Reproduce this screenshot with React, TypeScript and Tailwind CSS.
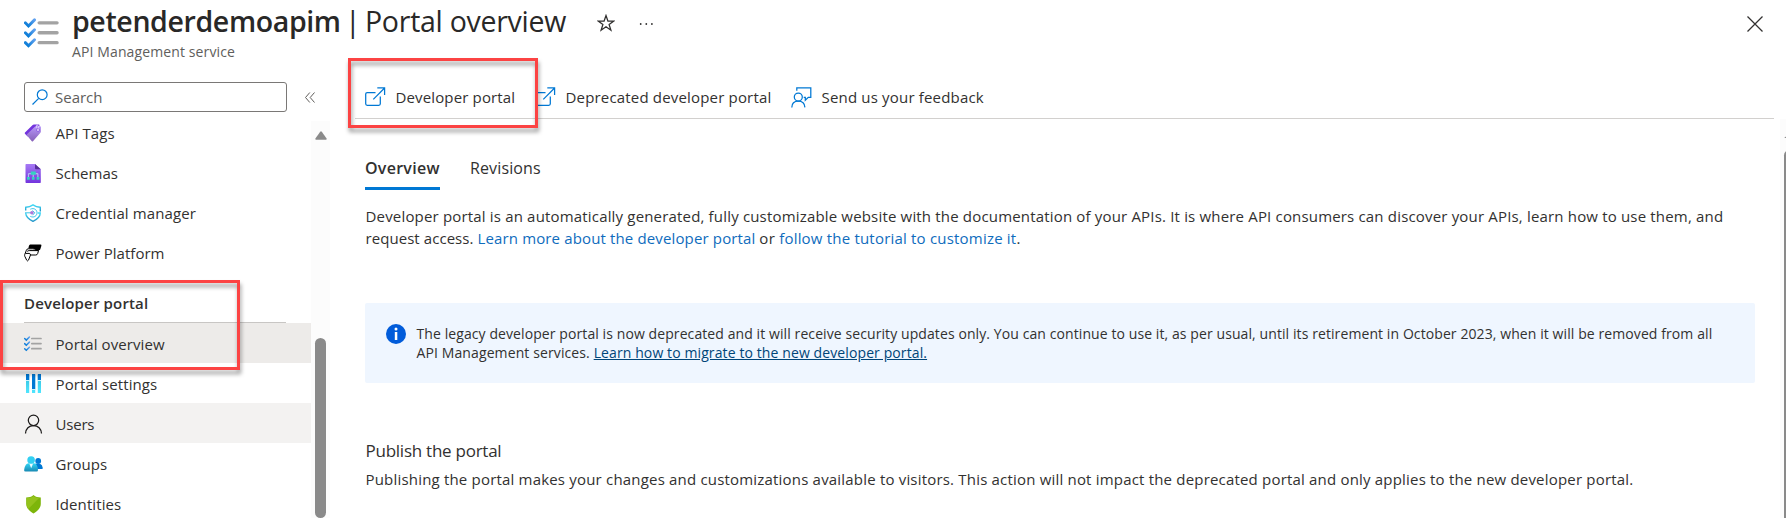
import React from 'react';

type IconProps = { size?: number };

function ChecklistIcon({ size = 18 }: IconProps) {
  return (
    <svg width={size} height={size} viewBox="0 0 18 18" fill="none" className="shrink-0">
      <defs>
        <linearGradient id="chk" x1="0" y1="1" x2="1" y2="0">
          <stop offset="0" stopColor="#0078d4" />
          <stop offset="1" stopColor="#5ea0ef" />
        </linearGradient>
      </defs>
      {[0, 5.1, 10.2].map((y) => (
        <g key={y} transform={`translate(0 ${y})`}>
          <path d="M.7 3.500 2.300 5.100 5.400 2" stroke="url(#chk)" strokeWidth="1.500" strokeLinecap="round" />
          <path d="M7.800 3.500H17" stroke="#a3a3a3" strokeWidth="1.700" strokeLinecap="round" />
        </g>
      ))}
    </svg>
  );
}

function TagIcon() {
  return (
    <svg width="18" height="18" viewBox="0 0 18 18" className="shrink-0">
      <defs>
        <linearGradient id="tag" x1="0" y1="1" x2="0" y2="0">
          <stop offset="0" stopColor="#8661b8" />
          <stop offset="1" stopColor="#b796f9" />
        </linearGradient>
      </defs>
      <path d="M1 8.600 8.400 1.200Q9 .5 10 .5h4.700q.9 0 .9.900L3.600 12.500.9 9.800Q.5 9.200 1 8.600Z" fill="#7334dd" />
      <path d="M3 10.300 10.800 2.700q.5-.5 1.200-.5h4q.9 0 .9.900v4.500q0 .6-.5 1.200L9 17.300q-.6.500-1.200 0L3 11.500q-.5-.6 0-1.200Z" fill="url(#tag)" />
      <circle cx="14" cy="6" r="1.400" fill="#fff" stroke="#7334dd" strokeWidth=".7" />
      <path d="M12.300 3.800q-.4-2.800 1-2.800 1.300.2 1 3.500" fill="none" stroke="#f1e8ff" strokeWidth=".8" />
    </svg>
  );
}

function SchemaIcon() {
  return (
    <svg width="18" height="19" viewBox="0 0 18 18" preserveAspectRatio="none" className="shrink-0">
      <defs>
        <linearGradient id="doc" x1="0" y1="0" x2="0" y2="1">
          <stop offset="0" stopColor="#a67af4" />
          <stop offset="1" stopColor="#7334dd" />
        </linearGradient>
      </defs>
      <path d="M2.200 0H11l5.800 5v12.300q0 .7-.7.700H2.200q-.7 0-.7-.7V.7Q1.500 0 2.200 0Z" fill="url(#doc)" />
      <path d="M11 0l5.800 5H12q-1 0-1-1Z" fill="#552f99" />
      <path d="M4.400 13V9.200h9.500V13M9.200 8v5" fill="none" stroke="#b9d9f5" strokeWidth=".9" />
      <path d="M6.800 7h5v3.200h-5zM3 12.300h2.800v2.600H3zM7.900 12.300h2.700v2.600H7.900zM12.600 12.300h2.800v2.600h-2.800z" fill="#32d4c0" />
    </svg>
  );
}

function CredentialIcon() {
  return (
    <svg width="18" height="18" viewBox="0 0 18 18" fill="none" className="shrink-0">
      <defs>
        <linearGradient id="cred" x1="0" y1="0" x2="0" y2="1">
          <stop offset="0" stopColor="#43dcf7" />
          <stop offset="1" stopColor="#2295c9" />
        </linearGradient>
      </defs>
      <path d="M1.700 6.400V3.300C4.800 3.100 6.800 2.300 9 .8c2.200 1.500 4.200 2.300 7.300 2.500v4.200" stroke="url(#cred)" strokeWidth="1.400" />
      <path d="M1.700 9c.2 4.200 3.200 6.400 7.300 8.300 4.100-1.900 7.100-4.100 7.300-8.300h-2.500" stroke="url(#cred)" strokeWidth="1.400" />
      <path d="M1 8.800h7.500M6.300 5.200c4-1.800 6.700.8 6.700 3.600s-2.700 5.400-6.700 3.600M8.500 6.500l2.300 2.300-2.300 2.400" stroke="#3fc5ec" strokeWidth="1" />
      <circle cx="7.900" cy="8.800" r="1.800" fill="#b078d8" />
    </svg>
  );
}

function PowerIcon() {
  return (
    <svg width="18" height="18" viewBox="0 0 18 18" fill="none" className="shrink-0">
      <path d="M6.200.5h10.300q1.200 0 .9 1.200l-1.100 3.500q-.3 1-1.400 1h-3q-1.200-1.600-3.400-1.600H4.300L4.900 2q.3-1.500 1.300-1.500Z" fill="#000" />
      <path d="M4.300 4.800h4.600q1.900 0 3 1.500h2.700l-.9 3.200q-.4 1.500-2 1.500H6.500l-2 5.100q-.8 1.600-1.800.1L.8 12.300q-.4-1 0-2L2.400 6.200q.5-1.400 1.900-1.400ZM3.200 7.400q.8-.8 2-.8h9M1.500 9.400h3.700q1.300.2 1.300 1.600" stroke="#000" strokeWidth="1" />
    </svg>
  );
}

function SettingsIcon() {
  return (
    <svg width="18" height="20" viewBox="0 0 18 20" className="shrink-0">
      <defs>
        <linearGradient id="bars" x1="0" y1="0" x2="0" y2="1">
          <stop offset="0" stopColor="#32bedd" />
          <stop offset="1" stopColor="#50e6ff" />
        </linearGradient>
      </defs>
      <path d="M2 1h3.200v18H2zM8 1h3.200v18H8zM13.800 1H17v18h-3.200z" fill="url(#bars)" />
      <path d="M2 0h3.200v6H2zM8 0h3.200v15H8zM13.800 0H17v6h-3.200z" fill="#0078d4" />
      <path d="M1.800 6.500h3.600M7.800 15.500h3.600M13.600 6.500h3.600" stroke="#c9f5ff" strokeWidth="1" />
    </svg>
  );
}

function UserIcon() {
  return (
    <svg width="19" height="20" viewBox="0 0 18 20" fill="none" stroke="#1b1a19" strokeWidth="1.250" className="shrink-0">
      <circle cx="9" cy="6.300" r="5.200" />
      <path d="M1 19.500C1.200 14.800 4.500 11.500 9 11.500s7.800 3.300 8 8" />
    </svg>
  );
}

function GroupsIcon() {
  return (
    <svg width="19" height="18" viewBox="0 0 19 18" className="shrink-0">
      <defs>
        <linearGradient id="grp" x1="0" y1="0" x2="0" y2="1">
          <stop offset="0" stopColor="#32d4f5" />
          <stop offset="1" stopColor="#198ab3" />
        </linearGradient>
      </defs>
      <path d="M11 8.700h5q2.300.8 2.800 4.300.1.900-.9.900H10Z" fill="#0078d4" />
      <circle cx="14.200" cy="6" r="2.900" fill="#0078d4" />
      <path d="M1.500 16.500Q0 16.500.1 15C.7 10.500 2.500 8.500 4.500 8.300h5.500c2.500.2 3.700 3 4 6.700q0 1.500-1.300 1.500Z" fill="url(#grp)" />
      <path d="m5.200 8.300 2 5 2-5Z" fill="#eefcff" />
      <circle cx="7.100" cy="5" r="3.800" fill="#32d0f2" />
    </svg>
  );
}

function ShieldIcon() {
  return (
    <svg width="19" height="19" viewBox="0 0 18 19" className="shrink-0">
      <path d="M9 0c2 2 4.500 2.400 7.300 2.500V9c0 4.500-4.300 7.600-7.300 9.500C6 16.600 1.700 13.500 1.700 9V2.500C4.500 2.400 7 2 9 0Z" fill="#7db50a" />
      <path d="M9 .9c2 1.500 3.500 2 5.500 2.200L3.800 14.100C2.800 12.700 2.300 11 2.300 9V3.100C5 3 7.300 2.400 9 .9Z" fill="#94c21c" />
    </svg>
  );
}

function ExternalIcon() {
  return (
    <svg width="21" height="20" viewBox="0 0 21 20" fill="none" stroke="#0078d4" strokeWidth="1.250" className="shrink-0">
      <path d="M10.500 5.600H2.200Q.7 5.600.7 7.100v9.700q0 1.500 1.500 1.500h11.600q1.500 0 1.500-1.500V9.500M8.300 12.400 19.600 1M12.300.8h7.300V8" />
    </svg>
  );
}

function FeedbackIcon() {
  return (
    <svg width="21" height="21" viewBox="0 0 21 21" fill="none" stroke="#0078d4" strokeWidth="1.250" className="shrink-0">
      <path d="M5.800 3.800V.9h14v9.500h-2.500l-3 2.800v-2.800h-1.600" />
      <circle cx="7.300" cy="10" r="4" />
      <path d="M.8 20.400C.9 16.500 3.500 14.200 7.300 14.200s6.400 2.300 6.600 6.200" />
    </svg>
  );
}

function NavRow({ icon, label, state, ls }: { icon: React.ReactNode; label: string; state?: string; ls?: string }) {
  return (
    <li className={`flex h-10 items-center pl-6 ${state ?? ''}`}>
      <span className="flex w-[31.5px] items-center">{icon}</span>
      <span className={`whitespace-nowrap ${ls ?? ''}`}>{label}</span>
    </li>
  );
}

export default function App() {
  return (
    <div className="relative flex h-[518px] w-[1786px] flex-col overflow-hidden bg-white font-['Open_Sans','Noto_Sans',sans-serif] text-[15px] text-[#323130]">
      <header className="flex h-[82px] shrink-0 items-start pl-6">
        <div className="mt-4 w-12">
          <ChecklistIcon size={35} />
        </div>
        <div>
          <div className="flex h-[42px] items-center text-[28.5px] leading-[42px] text-[#292827]">
            <h1 className="flex whitespace-nowrap">
              <span className="w-[273px] font-semibold tracking-[-0.370px]">petenderdemoapim</span>
              <span className="w-[20px]">|</span>
              <span className="w-[231.5px] tracking-[-0.270px]">Portal overview</span>
            </h1>
            <svg width="18" height="18" viewBox="0 0 18 18" fill="none" stroke="#323130" strokeWidth="1.250" className="mt-1">
              <path d="M9 1.500 10.900 7h5.900l-4.700 3.500 1.800 5.700L9 12.700l-4.900 3.500 1.800-5.700L1.200 7h5.900Z" />
            </svg>
            <svg width="15" height="4" viewBox="0 0 15 4" fill="#323130" className="mt-[5px] ml-[24.5px]">
              <circle cx="1.700" cy="2" r=".9" />
              <circle cx="7.300" cy="2" r=".9" />
              <circle cx="12.900" cy="2" r=".9" />
            </svg>
          </div>
          <p className="text-[14px] leading-5 tracking-[0.118px] text-[#605e5c]">API Management service</p>
        </div>
        <svg width="16" height="16" viewBox="0 0 16 16" stroke="#323130" strokeWidth="1.250" className="mt-[15.5px] mr-[23.5px] ml-auto">
          <path d="M.5.5 15.500 15.500M15.500.5.5 15.500" />
        </svg>
      </header>

      <div className="flex min-h-0 flex-1">
        <aside className="flex w-[330px] shrink-0 flex-col">
          <div className="flex h-[30px] shrink-0 items-center pl-6">
            <div className="flex h-[30px] w-[263px] items-center rounded-[3px] border border-[#7a7876] pl-[7px]">
              <svg width="16" height="16" viewBox="0 0 16 16" fill="none" stroke="#0078d4" strokeWidth="1.200">
                <circle cx="10.200" cy="5.700" r="4.900" />
                <path d="M6.700 9.300.5 15.500" />
              </svg>
              <span className="ml-[7px] text-[#605e5c]">Search</span>
            </div>
            <svg width="10" height="11" viewBox="0 0 10 11" fill="none" stroke="#605e5c" strokeWidth="1" className="ml-[18px]">
              <path d="M4.800.5.500 5.500l4.300 5M9.500.5 5.200 5.500l4.300 5" />
            </svg>
          </div>
          <div className="flex min-h-0 flex-1">
            <nav className="w-[311px] overflow-hidden pt-px">
              <ul>
                <NavRow icon={<TagIcon />} label="API Tags" ls="tracking-[0.100px]" />
                <NavRow icon={<SchemaIcon />} label="Schemas" />
                <NavRow icon={<CredentialIcon />} label="Credential manager" ls="tracking-[0.120px]" />
                <NavRow icon={<PowerIcon />} label="Power Platform" ls="tracking-[0.020px]" />
              </ul>
              <h2 className="ml-6 flex h-[50px] w-[262px] items-center border-b border-[#c8c6c4] pt-[12px] font-semibold tracking-[0.160px]">Developer portal</h2>
              <ul>
                <NavRow icon={<ChecklistIcon />} label="Portal overview" state="bg-[#edebe9] pt-[2px]" ls="tracking-[0.080px]" />
                <NavRow icon={<SettingsIcon />} label="Portal settings" state="pt-[2px]" ls="tracking-[0.120px]" />
                <NavRow icon={<UserIcon />} label="Users" state="bg-[#f3f2f1] pt-[2px]" ls="tracking-[-0.200px]" />
                <NavRow icon={<GroupsIcon />} label="Groups" state="pt-[2px]" />
                <NavRow icon={<ShieldIcon />} label="Identities" state="pt-[2px]" ls="tracking-[0.100px]" />
              </ul>
            </nav>
            <div className="mt-[9px] flex w-[19px] flex-col items-center bg-[#fcfcfc] pt-[10px]">
              <svg width="12" height="9" viewBox="0 0 12 9" fill="#8a8a8a">
                <path d="M5.200.8q.8-1 1.600 0l4.800 6.700q.5 1.300-.8 1.300H1.200Q-.1 8.800.4 7.500Z" />
              </svg>
              <div className="mt-[198px] h-[180px] w-[11px] rounded-full bg-[#8a8a8a]" />
            </div>
          </div>
        </aside>

        <main className="flex min-w-0 flex-1 flex-col">
          <div className="ml-[25px] flex h-[37px] w-[1419px] shrink-0 items-start border-b border-[#d2d0ce] pl-[10px]">
            <div className="flex h-[30px] w-[170px] items-center">
              <ExternalIcon />
              <span className="ml-[9.5px] whitespace-nowrap tracking-[0.140px]">Developer portal</span>
            </div>
            <div className="flex h-[30px] w-[256px] items-center">
              <ExternalIcon />
              <span className="ml-[9.5px] whitespace-nowrap tracking-[0.175px]">Deprecated developer portal</span>
            </div>
            <div className="flex h-[30px] items-center">
              <FeedbackIcon />
              <span className="ml-[9.5px] whitespace-nowrap tracking-[0.180px]">Send us your feedback</span>
            </div>
          </div>
          <div className="flex min-h-0 flex-1">
            <section className="flex-1 pl-[35px]">
              <div className="flex gap-[30px] pt-[33px] text-[16px]">
                <span className="h-[38px] w-[75px] border-b-[3px] border-[#0078d4] leading-8 font-semibold tracking-[0.270px]">Overview</span>
                <span className="leading-8 tracking-[0.130px]">Revisions</span>
              </div>
              <p className="mt-[14.5px] ml-[0.5px] leading-[22.5px] whitespace-nowrap">
                <span className="tracking-[0.174px]">Developer portal is an automatically generated, fully customizable website with the documentation of your APIs. It is where API consumers can discover your APIs, learn how to use them, and</span>
                <br />
                <span className="tracking-[0.062px]">request access. </span>
                <a className="tracking-[0.140px] text-[#0f6cbd]">Learn more about the developer portal</a>{' '}
                <span className="tracking-[0.250px]">or </span>
                <a className="tracking-[0.200px] text-[#0f6cbd]">follow the tutorial to customize it</a>.
              </p>
              <div className="mt-[53.5px] flex h-20 w-[1390px] rounded-[2px] bg-[#eff6ff] pt-[21px] pl-[21px] text-[14px]">
                <svg width="20" height="20" viewBox="0 0 20 20" className="shrink-0">
                  <circle cx="10" cy="10" r="10" fill="#015cda" />
                  <circle cx="10" cy="5" r="1.500" fill="#fff" />
                  <path d="M8.800 8h2.500v8H8.800z" fill="#fff" />
                </svg>
                <p className="ml-[10.5px] leading-[19px] whitespace-nowrap">
                  <span className="tracking-[0.090px]">The legacy developer portal is now deprecated and it will receive security updates only. You can continue to use it, as per usual, until its retirement in October 2023, when it will be removed from all</span>
                  <br />
                  <span className="tracking-[0.110px]">API Management services. </span>
                  <a className="tracking-[0.105px] text-[#004578] underline">Learn how to migrate to the new developer portal.</a>
                </p>
              </div>
              <h3 className="mt-[56px] ml-[0.5px] text-[17px] leading-6 tracking-[-0.250px]">Publish the portal</h3>
              <p className="mt-[5px] ml-[0.5px] leading-[22px] tracking-[0.190px] whitespace-nowrap">Publishing the portal makes your changes and customizations available to visitors. This action will not impact the deprecated portal and only applies to the new developer portal.</p>
            </section>
            <div className="flex w-[6px] flex-col items-start overflow-hidden bg-[#fcfcfc] pt-[14px] pl-1">
              <svg width="12" height="6" viewBox="0 0 12 6" fill="#8a8a8a" className="shrink-0">
                <path d="M5 .8q1-1.200 2 0l4.500 4.200H.2Z" />
              </svg>
              <div className="mt-[11px] h-[400px] w-[11px] shrink-0 rounded-full bg-[#8a8a8a]" />
            </div>
          </div>
        </main>
      </div>

      <div className="absolute top-[280px] left-0 h-[90px] w-[240px] border-[3px] border-[#fc4343] [filter:drop-shadow(1px_4px_2px_rgb(0_0_0/0.4))]" />
      <div className="absolute top-[58px] left-[348px] h-[70px] w-[190px] border-[3px] border-[#fc4343] [filter:drop-shadow(1px_4px_2px_rgb(0_0_0/0.4))]" />
    </div>
  );
}
